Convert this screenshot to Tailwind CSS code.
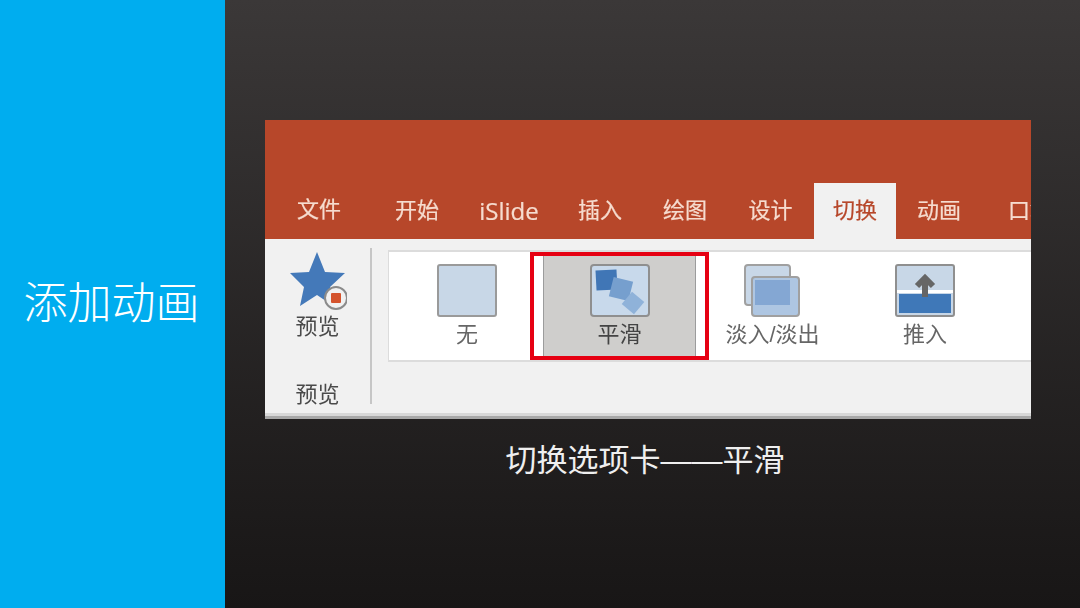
<!DOCTYPE html>
<html lang="zh">
<head>
    <meta charset="UTF-8">
    <title>添加动画</title>
    <script src="https://cdn.jsdelivr.net/npm/@tailwindcss/browser@4"></script>
</head>
<body class="w-[1080px] h-[608px] overflow-hidden font-['Liberation_Sans','Noto_Sans_CJK_SC',sans-serif]">
    <div class="flex h-[608px]">
        <!-- Left title bar -->
        <div class="w-[225px] shrink-0 bg-[#00adef] flex items-center justify-center pr-[2px]">
            <h1 class="text-[44px] leading-none font-light text-white">添加动画</h1>
        </div>

        <!-- Main area -->
        <div class="w-[855px] shrink-0 bg-gradient-to-b from-[#3b3838] to-[#181616] pl-[40px] pr-[49px] pt-[120px]">
            <div class="relative h-[299px] overflow-hidden bg-[#f1f1f1] blur-[0.4px]">
                <!-- Title strip + tabs -->
                <div class="h-[119px] bg-[#b7472a] flex items-end text-[22px] leading-none text-[#f6dccf] [-webkit-text-stroke:0.2px]">
                    <div class="w-[108px] shrink-0 h-[56px] pt-[16px] text-center">文件</div>
                    <div class="w-[88px] shrink-0 h-[56px] pt-[17px] text-center">开始</div>
                    <div class="w-[96px] shrink-0 h-[56px] pt-[16px] text-center font-['Open_Sans','Liberation_Sans',sans-serif] text-[24px]">iSlide</div>
                    <div class="w-[86px] shrink-0 h-[56px] pt-[17px] text-center">插入</div>
                    <div class="w-[84px] shrink-0 h-[56px] pt-[17px] text-center">绘图</div>
                    <div class="w-[87px] shrink-0 h-[56px] pt-[17px] text-center">设计</div>
                    <div class="w-[82px] shrink-0 h-[56px] pt-[17px] text-center bg-[#f1f1f1] text-[#b7472a]">切换</div>
                    <div class="w-[86px] shrink-0 h-[56px] pt-[17px] text-center">动画</div>
                    <div class="w-[49px] shrink-0 h-[56px] pt-[17px] pl-[26px] overflow-hidden whitespace-nowrap">口袋动画</div>
                </div>

                <!-- Ribbon -->
                <div class="h-[177px] flex border-b-[3px] border-[#d8d8d8]">
                    <div class="w-[107px] h-[156px] mt-[9px] shrink-0 pt-[4px] flex flex-col items-center text-[22px] leading-none text-[#4a4a4a] border-r-[2px] border-[#c6c6c6]">
                        <svg class="w-[58px] h-[60px] shrink-0" viewBox="0 0 58 60">
                            <path d="M28 0 L36 20 L56 21 L41 35 L46 55 L28 43 L11 54 L15 35 L1 21 L20 20 Z" fill="#4479b9"/>
                            <circle cx="47" cy="46" r="11" fill="#f1f1f1" stroke="#8b8b8b" stroke-width="2"/>
                            <rect x="42" y="41" width="10" height="10" rx="1" fill="#d4532d"/>
                        </svg>
                        <span class="mt-[4px] shrink-0">预览</span>
                        <span class="mt-[46px] shrink-0">预览</span>
                    </div>

                    <!-- Transition gallery -->
                    <div class="ml-[16px] mt-[11px] h-[112px] flex-1 min-w-0 bg-white border-t-[2px] border-b-[2px] border-l-[1px] border-[#dcdcdc] flex pl-[2px] pt-[2px] text-[22px] leading-none text-[#666]">
                        <div class="w-[152px] shrink-0 flex flex-col items-center pt-[10px]">
                            <div class="w-[60px] h-[53px] rounded-[3px] bg-[#c8d7e7] border-[2px] border-[#9a9a9a]"></div>
                            <span class="mt-[7px]">无</span>
                        </div>
                        <div class="w-[153px] shrink-0 h-[104px] flex flex-col items-center pt-[10px] bg-[#cfcecc] border-x-[1px] border-[#9c9c9c] text-[#444]">
                            <svg class="w-[60px] h-[53px]" viewBox="0 0 60 53">
                                <rect x="1" y="1" width="58" height="51" rx="3" fill="#c8d9eb" stroke="#8f8f8f" stroke-width="2"/>
                                <rect x="6" y="6" width="21" height="20" transform="rotate(-3 16 16)" fill="#4076b6"/>
                                <rect x="21" y="15" width="20" height="20" transform="rotate(14 31 25)" fill="#769fce"/>
                                <rect x="35" y="31" width="16" height="16" transform="rotate(40 43 39)" fill="#8fb2d9"/>
                            </svg>
                            <span class="mt-[7px]">平滑</span>
                        </div>
                        <div class="w-[153px] shrink-0 flex flex-col items-center pt-[10px]">
                            <svg class="w-[56px] h-[53px] -translate-x-[1px]" viewBox="0 0 56 53">
                                <rect x="1" y="1" width="45" height="40" rx="3" fill="#c8d7e7" stroke="#a0a0a0" stroke-width="2"/>
                                <rect x="8" y="13" width="47" height="39" rx="3" fill="#aec6e2" stroke="#a0a0a0" stroke-width="2"/>
                                <rect x="11" y="16" width="35" height="25" fill="#84a7d3"/>
                            </svg>
                            <span class="mt-[7px]">淡入/淡出</span>
                        </div>
                        <div class="w-[152px] shrink-0 flex flex-col items-center pt-[10px]">
                            <svg class="w-[60px] h-[53px]" viewBox="0 0 60 53">
                                <rect x="1" y="1" width="58" height="51" rx="2" fill="#c8d7e7" stroke="#8f8f8f" stroke-width="2"/>
                                <rect x="2" y="26" width="56" height="3" fill="#ffffff"/>
                                <rect x="4" y="30" width="52" height="19" fill="#3f78b8"/>
                                <path d="M30 15 V33 M22 22 L30 14 L38 22" fill="none" stroke="#666" stroke-width="6"/>
                            </svg>
                            <span class="mt-[7px]">推入</span>
                        </div>
                    </div>
                </div>
                <div class="h-[3px] bg-[#a8a8a8]"></div>

                <!-- Red highlight over the selected item -->
                <div class="absolute left-[265px] top-[132px] w-[179px] h-[108px] border-[4px] border-[#e60012]"></div>
            </div>

            <p class="mt-[26px] pr-[6px] text-center text-[31px] leading-none text-[#efefef]">切换选项卡——平滑</p>
        </div>
    </div>
</body>
</html>
